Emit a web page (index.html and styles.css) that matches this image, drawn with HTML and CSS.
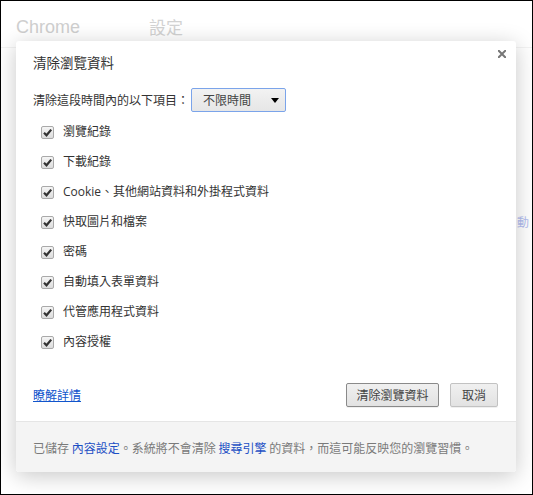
FILE: index.html
```html
<!DOCTYPE html>
<html lang="zh-Hant">
<head>
<meta charset="utf-8">
<title>清除瀏覽資料</title>
<link rel="stylesheet" href="styles.css">
</head>
<body>
<div class="frame">
  <header class="page-head">
    <span class="brand">Chrome</span>
    <span class="page-title">設定</span>
  </header>
  <div class="page-body"><span class="ghost">自動</span></div>

  <div class="dialog" role="dialog">
    <button class="close" aria-label="關閉">
      <svg width="8" height="8" viewBox="0 0 8 8"><path d="M0.8 0.8 L7.2 7.2 M7.2 0.8 L0.8 7.2" stroke="#777" stroke-width="2" stroke-linecap="square"/></svg>
    </button>
    <h1 class="dlg-title">清除瀏覽資料</h1>
    <div class="dlg-body">
      <div class="time-row">
        <span>清除這段時間內的以下項目：</span>
        <div class="select">
          <span>不限時間</span>
          <svg class="arrow" width="8" height="5" viewBox="0 0 8 5"><path d="M0 0 H8 L4 5 Z" fill="#000"/></svg>
        </div>
      </div>
      <ul class="checks">
        <li><span class="cb"><svg width="11" height="11" viewBox="0 0 11 11"><path d="M2 5.8 L4.5 8.3 L9.2 2.6" fill="none" stroke="#333" stroke-width="2.2"/></svg></span>瀏覽紀錄</li>
        <li><span class="cb"><svg width="11" height="11" viewBox="0 0 11 11"><path d="M2 5.8 L4.5 8.3 L9.2 2.6" fill="none" stroke="#333" stroke-width="2.2"/></svg></span>下載紀錄</li>
        <li><span class="cb"><svg width="11" height="11" viewBox="0 0 11 11"><path d="M2 5.8 L4.5 8.3 L9.2 2.6" fill="none" stroke="#333" stroke-width="2.2"/></svg></span>Cookie、其他網站資料和外掛程式資料</li>
        <li><span class="cb"><svg width="11" height="11" viewBox="0 0 11 11"><path d="M2 5.8 L4.5 8.3 L9.2 2.6" fill="none" stroke="#333" stroke-width="2.2"/></svg></span>快取圖片和檔案</li>
        <li><span class="cb"><svg width="11" height="11" viewBox="0 0 11 11"><path d="M2 5.8 L4.5 8.3 L9.2 2.6" fill="none" stroke="#333" stroke-width="2.2"/></svg></span>密碼</li>
        <li><span class="cb"><svg width="11" height="11" viewBox="0 0 11 11"><path d="M2 5.8 L4.5 8.3 L9.2 2.6" fill="none" stroke="#333" stroke-width="2.2"/></svg></span>自動填入表單資料</li>
        <li><span class="cb"><svg width="11" height="11" viewBox="0 0 11 11"><path d="M2 5.8 L4.5 8.3 L9.2 2.6" fill="none" stroke="#333" stroke-width="2.2"/></svg></span>代管應用程式資料</li>
        <li><span class="cb"><svg width="11" height="11" viewBox="0 0 11 11"><path d="M2 5.8 L4.5 8.3 L9.2 2.6" fill="none" stroke="#333" stroke-width="2.2"/></svg></span>內容授權</li>
      </ul>
      <div class="actions">
        <a class="learn" href="#">瞭解詳情</a>
        <div class="btns">
          <button class="btn primary">清除瀏覽資料</button>
          <button class="btn cancel">取消</button>
        </div>
      </div>
    </div>
    <footer class="dlg-foot">已儲存 <a href="#">內容設定</a>。系統將不會清除 <a href="#">搜尋引擎</a> 的資料，而這可能反映您的瀏覽習慣。</footer>
  </div>
</div>
</body>
</html>
```

FILE: styles.css
```css
* { box-sizing: border-box; }
html, body { margin: 0; padding: 0; background: #fff; }
body {
  font-family: "Open Sans", "Noto Sans CJK TC", sans-serif;
  font-size: 12px;
  color: #333;
}
.frame {
  position: relative;
  width: 533px;
  height: 495px;
  border: 1px solid #000;
  overflow: hidden;
  background: #fff;
  white-space: nowrap;
}
.page-head {
  display: flex;
  align-items: center;
  height: 47px;
  padding: 5px 0 0 15px;
  border-bottom: 1px solid #f3f3f3;
  font-family: "Liberation Sans", "Noto Sans CJK TC", sans-serif;
  font-size: 18px;
  line-height: 24px;
  color: #cfcfcf;
}
.brand { width: 133px; }
.page-title { font-family: "Noto Sans CJK TC", sans-serif; font-size: 17px; color: #d2d2d2; }
.page-body {
  padding: 166px 0 0 504px;
  line-height: 16px;
}
.ghost { color: #b3bdf0; font-family: "Noto Sans CJK TC", sans-serif; }

.dialog {
  position: absolute;
  left: 15px;
  top: 40px;
  width: 500px;
  height: 431px;
  display: flex;
  flex-direction: column;
  background: #fff;
  border-radius: 3px;
  box-shadow: 0 4px 22px rgba(0, 0, 0, 0.22);
  overflow: hidden;
}
.close {
  position: absolute;
  right: 10px;
  top: 9px;
  width: 8px;
  height: 8px;
  padding: 0;
  border: 0;
  background: none;
  display: flex;
}
.dlg-title {
  margin: 0;
  padding: 11px 17px 0;
  font-family: "Noto Sans CJK TC", sans-serif;
  font-weight: normal;
  font-size: 13.5px;
  line-height: 20px;
  color: #333;
}
.dlg-body {
  flex: 1;
  display: flex;
  flex-direction: column;
  padding: 16px 18px 14px 17px;
}
.time-row {
  display: flex;
  align-items: center;
  height: 24px;
  line-height: 16px;
  font-family: "Noto Sans CJK TC", sans-serif;
}
.select {
  margin-left: 2px;
  width: 95px;
  height: 24px;
  display: flex;
  align-items: center;
  justify-content: space-between;
  padding: 0 6px 0 11px;
  border: 1px solid #7ba4ea;
  border-radius: 2px;
  background: linear-gradient(#f2f2f2, #e6e6e6);
  color: #444;
}
.arrow { display: block; }
.checks {
  list-style: none;
  margin: 5px 0 0;
  padding: 0 0 0 8px;
}
.checks li {
  display: flex;
  align-items: center;
  height: 30px;
  line-height: 16px;
}
.cb {
  width: 13px;
  height: 13px;
  margin-right: 9px;
  border: 1px solid #a9a9a9;
  border-radius: 2px;
  background: linear-gradient(#f5f5f5, #dcdcdc);
  display: flex;
  align-items: center;
  justify-content: center;
  flex: none;
}
.cb svg { display: block; }
.actions {
  margin-top: auto;
  display: flex;
  align-items: center;
  justify-content: space-between;
  height: 24px;
}
.learn {
  color: #15c;
  text-decoration: underline;
  line-height: 16px;
  font-family: "Noto Sans CJK TC", sans-serif;
}
.btns { display: flex; gap: 11px; }
.btn {
  height: 24px;
  padding: 0;
  border: 1px solid #c2c2c2;
  border-radius: 2px;
  background: linear-gradient(#f0f0f0, #e2e2e2);
  font-family: "Noto Sans CJK TC", sans-serif;
  font-size: 12px;
  line-height: 16px;
  color: #444;
  box-shadow: 0 1px 0 rgba(0,0,0,0.06);
}
.btn.primary { width: 93px; border-color: #8a8a8a; }
.btn.cancel { width: 48px; }
.dlg-foot {
  height: 51px;
  padding: 18px 17px 0;
  border-top: 1px solid #e5e5e5;
  background: #f4f4f4;
  color: #7a7a7a;
  line-height: 16px;
  font-family: "Noto Sans CJK TC", sans-serif;
}
.dlg-foot a { color: #1c4fc4; text-decoration: none; }
```
